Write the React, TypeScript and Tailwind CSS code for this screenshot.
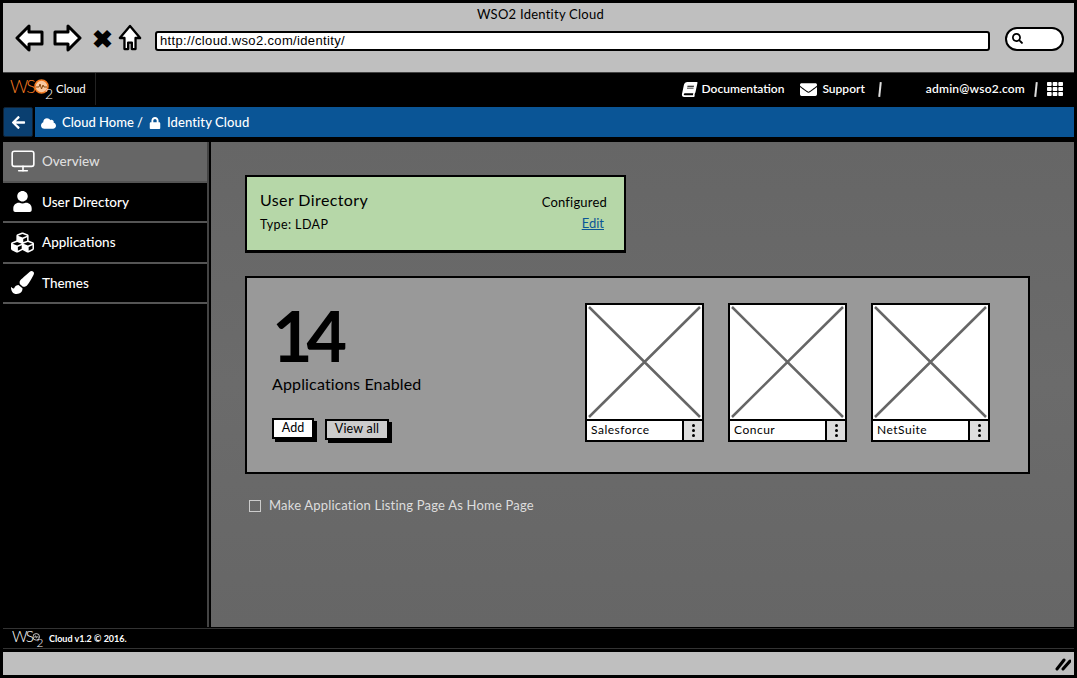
import { FaArrowLeft, FaBook, FaCloud, FaCubes, FaEnvelope, FaLock, FaPaintBrush, FaSearch, FaTh, FaUser } from "react-icons/fa";
import { Monitor } from "lucide-react";

function Logo({ color, fill, wave }: { color: string; fill: string; wave: string }) {
  return (
    <span className="flex items-start font-['Lato',sans-serif] font-light leading-none" style={{ color }}>
      <span className="text-[18px] tracking-[-2px]">WS</span>
      <svg width="15" height="15" viewBox="0 0 15 15" className="mt-[2px]">
        <circle cx="7.5" cy="7.5" r="6.5" fill={fill} stroke={color} strokeWidth="1.5" />
        <path d="M2 8 H5 L6 5 L7.5 10 L9 6 L10 8 H13" fill="none" stroke={wave} strokeWidth="1" />
      </svg>
      <span className="-ml-[4px] mt-[10px] text-[14px] text-white">2</span>
    </span>
  );
}

function NavArrow({ flip }: { flip?: boolean }) {
  return (
    <svg width="30" height="28" viewBox="0 0 30 28" className={flip ? "-scale-x-100" : ""}>
      <path d="M2 14 L14 2 L14 8 L27 8 L27 20 L14 20 L14 26 Z" fill="#fff" stroke="#000" strokeWidth="3" strokeLinejoin="round" />
    </svg>
  );
}

function SideItem({ icon, label, active }: { icon: React.ReactNode; label: string; active?: boolean }) {
  return (
    <div className={`flex h-[40.5px] items-center border-b-2 border-[#555] ${active ? "bg-[#666] border-[#333] text-[#ddd]" : "text-white"}`}>
      <span className="flex w-[39px] shrink-0 justify-center">{icon}</span>
      <span className="text-[13.5px] font-medium">{label}</span>
    </div>
  );
}

function AppTile({ name }: { name: string }) {
  return (
    <div className="w-[119px]">
      <div className="h-[118px] border-2 border-black bg-white">
        <svg width="115" height="114" viewBox="0 0 115 114" className="block">
          <path d="M2 2 L113 112 M113 2 L2 112" stroke="#666" strokeWidth="2.5" />
        </svg>
      </div>
      <div className="flex h-[21px] border-2 border-t-0 border-black bg-white">
        <span className="flex-1 pl-[4px] text-[12px] leading-[18px] tracking-[0.5px] text-black">{name}</span>
        <span className="flex w-[20px] flex-col items-center justify-center gap-[2px] border-l-2 border-black bg-[#ddd]">
          <i className="h-[3px] w-[3px] rounded-full bg-black" />
          <i className="h-[3px] w-[3px] rounded-full bg-black" />
          <i className="h-[3px] w-[3px] rounded-full bg-black" />
        </span>
      </div>
    </div>
  );
}

export default function App() {
  return (
    <div className="flex h-[678px] w-[1077px] flex-col overflow-hidden border-x-[3px] border-y-[3px] border-black bg-black font-['Lato',sans-serif]">
      {/* browser chrome */}
      <div className="h-[69px] shrink-0 bg-[#bfbfbf] pl-[12px] pr-[8px]">
        <div className="pt-[2px] text-center text-[13px] leading-[18px] tracking-[0.25px] text-black">WSO2 Identity Cloud</div>
        <div className="flex items-center">
          <NavArrow />
          <span className="ml-[7px]"><NavArrow flip /></span>
          <span className="ml-[10px] text-[25px] leading-none font-black text-black">✖</span>
          <svg width="24" height="30" viewBox="0 0 26 30" className="ml-[5px]">
            <path d="M13 2 L24 15 L19 15 L19 27 L15 27 L15 20 L11 20 L11 27 L7 27 L7 15 L2 15 Z" fill="#fff" stroke="#000" strokeWidth="2.5" strokeLinejoin="round" />
          </svg>
          <div className="ml-[13px] mt-[6px] flex h-[20px] w-[835px] shrink-0 items-center rounded-[3px] border-[2.5px] border-black bg-white pl-[3px] font-['Liberation_Sans',sans-serif] text-[13px] tracking-[0.35px] text-black">
            http://cloud.wso2.com/identity/
          </div>
          <div className="ml-[15px] mt-[1px] flex h-[24px] w-[59px] shrink-0 items-center rounded-full border-[2.5px] border-black bg-white pl-[5px]">
            <FaSearch size={11} className="text-black" />
          </div>
        </div>
      </div>

      {/* top nav */}
      <div className="flex h-[33px] shrink-0 items-center border-t border-[#444] bg-black text-white">
        <div className="flex h-full w-[93px] items-center gap-[3px] border-r border-[#222] pl-[7px]">
          <Logo color="#f47b20" fill="#f9c9a0" wave="#8a4a10" />
          <span className="text-[11.5px]">Cloud</span>
        </div>
        <div className="ml-auto flex items-center text-[12px] font-semibold">
          <FaBook size={15} className="mr-[5px] -skew-x-12" />
          <span>Documentation</span>
          <FaEnvelope size={17} className="ml-[16px] mr-[5px]" />
          <span>Support</span>
          <span className="ml-[14px] h-[15px] w-[2px] rotate-[6deg] bg-[#ddd]" />
          <span className="ml-[45px] tracking-[0.2px]">admin@wso2.com</span>
          <span className="ml-[10px] h-[15px] w-[2px] rotate-[6deg] bg-[#ddd]" />
          <FaTh size={16} className="ml-[10px] mr-[11px]" />
        </div>
      </div>

      {/* breadcrumb */}
      <div className="mt-[2px] flex h-[30px] shrink-0 text-white">
        <div className="flex w-[30px] items-center justify-center rounded-[2px] border border-[#123] bg-[#0a3f70]">
          <FaArrowLeft size={15} />
        </div>
        <div className="ml-[2px] flex flex-1 items-center gap-[5px] bg-[#0a5596] pl-[6px] pt-[2px] text-[13px] font-medium">
          <FaCloud size={15} />
          <span className="ml-[1px]">Cloud Home /</span>
          <FaLock size={12} className="ml-[1px]" />
          <span className="ml-[1px] tracking-[0.1px]">Identity Cloud</span>
        </div>
      </div>

      <div className="mt-[5px] flex min-h-0 flex-1">
        {/* sidebar */}
        <div className="w-[206px] shrink-0 border-r-2 border-[#444] bg-black">
          <SideItem active icon={<Monitor size={26} strokeWidth={1.5} className="text-white" />} label="Overview" />
          <SideItem icon={<FaUser size={21} />} label="User Directory" />
          <SideItem icon={<FaCubes size={23} />} label="Applications" />
          <SideItem icon={<FaPaintBrush size={23} />} label="Themes" />
        </div>

        {/* content */}
        <div className="ml-[2px] min-w-0 flex-1 bg-gradient-to-b from-[#666] via-[#6b6b6b] to-[#666] pl-[34px] pt-[33px]">
          <div className="flex h-[77px] w-[381px] justify-between border-[2.5px] border-black bg-[#b6d7a8] pl-[13px] pr-[17px] text-black shadow-[0_1px_0_#000]">
            <div>
              <div className="mt-[12px] text-[16px] leading-[22px] tracking-[0.4px]">User Directory</div>
              <div className="mt-[6px] text-[12.5px] leading-[16px] tracking-[0.4px]">Type: LDAP</div>
            </div>
            <div className="text-right">
              <div className="mt-[16px] text-[13px] leading-[18px] tracking-[0.2px]">Configured</div>
              <div className="mr-[3px] mt-[3px] text-[13px] leading-[18px] text-[#0a5596] underline">Edit</div>
            </div>
          </div>

          <div className="mt-[24px] flex h-[198px] w-[785px] border-[2.5px] border-black bg-[#999]">
            <div className="w-[338px] shrink-0 pl-[25px] text-black">
              <div className="pt-[20px] text-[70px] leading-[75px] font-bold tracking-[-6px]">14</div>
              <div className="mt-[1px] text-[16px] leading-[20px] tracking-[0.15px]">Applications Enabled</div>
              <div className="mt-[24px] flex items-start gap-[11px] text-[12.5px]">
                <span className="flex h-[21px] w-[42px] items-center justify-center border-2 border-black bg-white shadow-[3px_3px_0_#000]">Add</span>
                <span className="mt-[1px] flex h-[21px] w-[64px] items-center justify-center border-2 border-black bg-[#ccc] tracking-[0.2px] shadow-[3px_3px_0_#000]">View all</span>
              </div>
            </div>
            <div className="flex gap-[24px] pt-[25px]">
              <AppTile name="Salesforce" />
              <AppTile name="Concur" />
              <AppTile name="NetSuite" />
            </div>
          </div>

          <div className="mt-[22px] flex items-center text-[13px] tracking-[0.2px] text-[#ddd]">
            <span className="ml-[4px] h-[12px] w-[12px] border border-[#ccc]" />
            <span className="ml-[8px]">Make Application Listing Page As Home Page</span>
          </div>
        </div>
      </div>

      {/* footer */}
      <div className="mt-[1px] flex h-[21px] shrink-0 items-center border-y border-[#333] bg-black pl-[9px] pt-[1px] text-[9px] font-bold text-white">
        <span className="w-[37px] shrink-0 origin-left scale-[0.85]"><Logo color="#fff" fill="transparent" wave="#fff" /></span>
        <span>Cloud v1.2 © 2016.</span>
      </div>
      <div className="mt-[3px] flex h-[23px] shrink-0 items-center justify-end bg-[#bfbfbf] pr-[3px]">
        <svg width="16" height="14" viewBox="0 0 16 14">
          <path d="M2 12 L9 3 M8 12 L15 4" stroke="#000" strokeWidth="3" strokeLinecap="round" />
        </svg>
      </div>
    </div>
  );
}
